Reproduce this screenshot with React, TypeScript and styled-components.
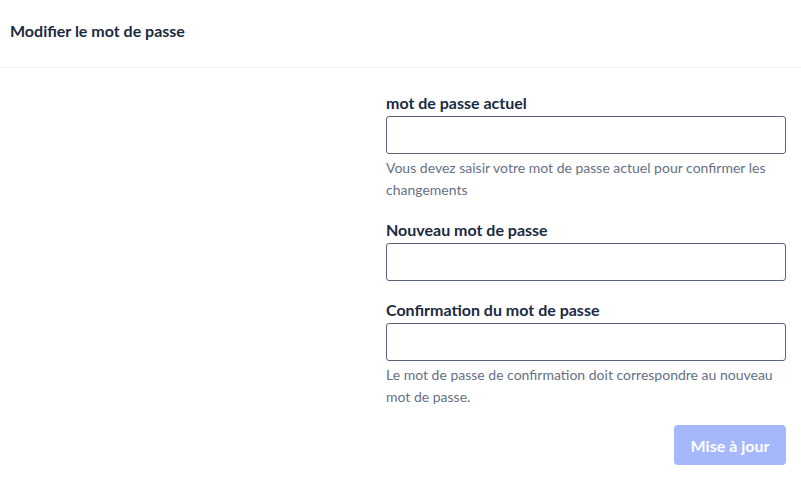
import styled, { createGlobalStyle } from "styled-components"

const GlobalStyle = createGlobalStyle`
  body {
    margin: 0;
    background: #ffffff;
    font-family: Lato, "Open Sans", Arial, sans-serif;
    color: #1b2a42;
  }
`

const Page = styled.div`
  width: 801px;
  min-height: 478px;
  background: #ffffff;
`

const Header = styled.div`
  box-sizing: border-box;
  height: 68px;
  display: flex;
  align-items: center;
  padding: 0 10px 6px;
  border-bottom: 1px solid #f1f2f4;
`

const HeaderTitle = styled.h1`
  margin: 0;
  font-size: 16px;
  font-weight: 700;
  color: #1b2a42;
`

const Body = styled.div`
  display: grid;
  grid-template-columns: 1fr 400px;
  padding: 25px 15px 0 10px;
`

const Form = styled.form`
  grid-column: 2;
  display: flex;
  flex-direction: column;
  gap: 19px;
`

const Field = styled.div`
  display: flex;
  flex-direction: column;
`

const Label = styled.label`
  font-size: 16px;
  font-weight: 700;
  line-height: 20px;
  color: #1b2a42;
  margin-bottom: 3px;
`

const Input = styled.input`
  box-sizing: border-box;
  height: 38px;
  width: 100%;
  border: 1px solid #596579;
  border-radius: 3px;
  padding: 0 10px;
  font-size: 14px;
  font-family: inherit;
  outline: none;
`

const Help = styled.p`
  margin: 3px 0 0;
  font-size: 14px;
  line-height: 22px;
  color: #667085;
`

const Actions = styled.div`
  display: flex;
  justify-content: flex-end;
  margin-top: -2px;
`

const Button = styled.button`
  width: 112px;
  height: 40px;
  border: none;
  border-radius: 4px;
  background: #a5b8fb;
  color: #ffffff;
  font-family: inherit;
  font-size: 16px;
  font-weight: 700;
  cursor: not-allowed;
`

const App = () => {
  return (
    <Page>
      <GlobalStyle />
      <Header>
        <HeaderTitle>Modifier le mot de passe</HeaderTitle>
      </Header>
      <Body>
        <Form onSubmit={(e) => e.preventDefault()}>
          <Field>
            <Label>mot de passe actuel</Label>
            <Input type="password" />
            <Help>Vous devez saisir votre mot de passe actuel pour confirmer les changements</Help>
          </Field>
          <Field>
            <Label>Nouveau mot de passe</Label>
            <Input type="password" />
          </Field>
          <Field>
            <Label>Confirmation du mot de passe</Label>
            <Input type="password" />
            <Help>Le mot de passe de confirmation doit correspondre au nouveau mot de passe.</Help>
          </Field>
          <Actions>
            <Button type="submit" disabled>Mise à jour</Button>
          </Actions>
        </Form>
      </Body>
    </Page>
  )
}

export default App
